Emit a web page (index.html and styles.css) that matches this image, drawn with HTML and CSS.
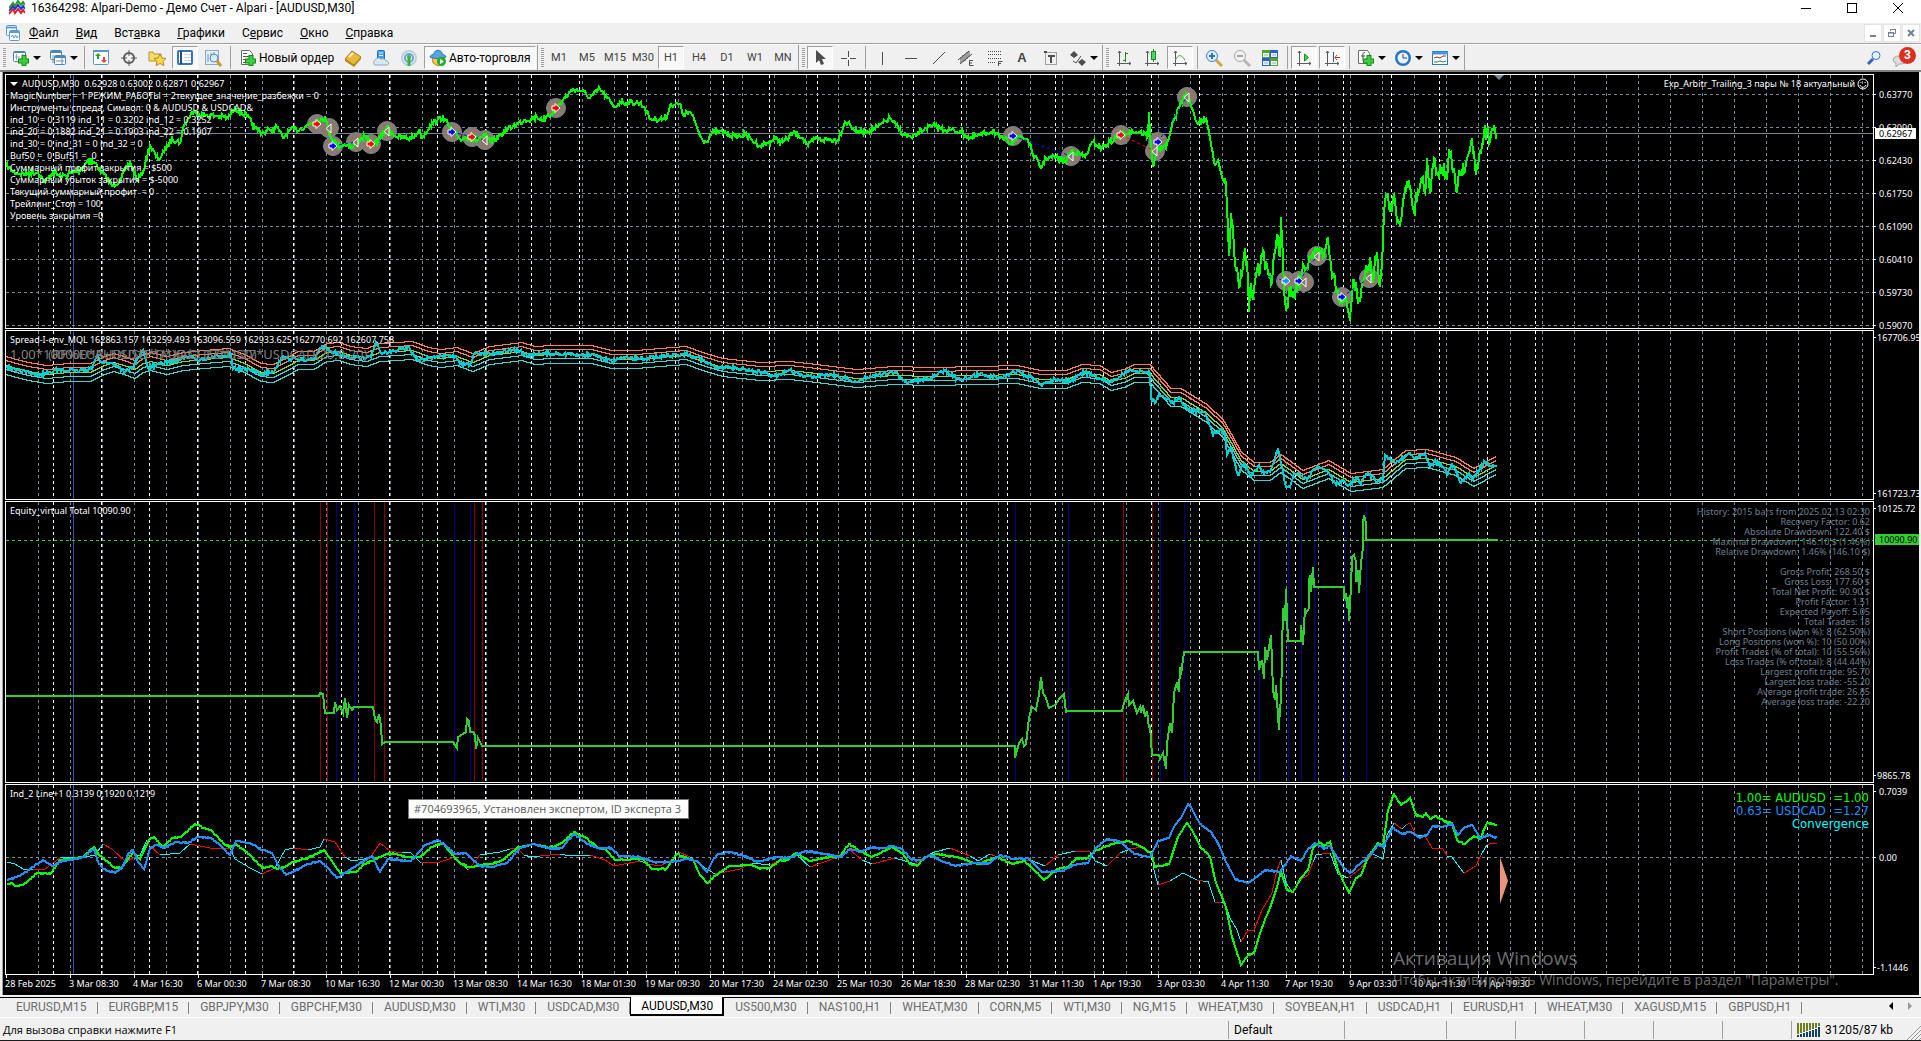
FILE: index.html
```html
<!DOCTYPE html>
<html lang="ru">
<head>
<meta charset="utf-8">
<title>16364298: Alpari-Demo - Демо Счет - Alpari - [AUDUSD,M30]</title>
<link rel="stylesheet" href="styles.css">
</head>
<body>
<header class="titlebar">
  <svg class="app-icon" width="16" height="16" viewBox="0 0 16 16" fill="none" stroke-width="2"><path d="M0 8L4 3L6 6L9 1L12 5L14 2L16 5" stroke="#1ea01e"/><path d="M0 11L4 6L6 9L9 5L12 9L14 6L16 9" stroke="#2233dd"/><path d="M0 14L4 9L6 13L9 9L12 13L14 10L16 13" stroke="#e02020"/></svg>
  <h1 class="title">16364298: Alpari-Demo - Демо Счет - Alpari - [AUDUSD,M30]</h1>
  <div class="window-buttons">
    <button aria-label="Свернуть"><svg width="12" height="12"><path d="M1 6.5h10" stroke="#000"/></svg></button>
    <button aria-label="Развернуть"><svg width="12" height="12"><rect x="1.5" y="1.5" width="9" height="9" fill="none" stroke="#000"/></svg></button>
    <button aria-label="Закрыть"><svg width="12" height="12"><path d="M1 1l10 10M11 1L1 11" stroke="#000"/></svg></button>
  </div>
</header>

<nav class="menubar">
  <svg class="menu-icon" width="16" height="16" viewBox="0 0 16 16"><rect x="1.5" y=".5" width="10" height="10" rx="1" fill="#fff" stroke="#5b9bd5"/><path d="M2 2.500h9" stroke="#5b9bd5" stroke-width="2"/><rect x="4.500" y="5.500" width="10" height="10" rx="1" fill="#fff" stroke="#5b9bd5"/><path d="M5 7h9" stroke="#5b9bd5" stroke-width="2"/><path d="M6 12l1.500-2 1.500 3 1.500-3 1.500 3 1-2" fill="none" stroke="#5b9bd5"/></svg>
  <button><u>Ф</u>айл</button><button><u>В</u>ид</button><button>Вст<u>а</u>вка</button><button><u>Г</u>рафики</button><button>С<u>е</u>рвис</button><button><u>О</u>кно</button><button><u>С</u>правка</button>
  <div class="child-buttons">
    <button aria-label="Свернуть окно"><svg width="10" height="10"><path d="M2 8h6" stroke="#6f8296" stroke-width="2"/></svg></button>
    <button aria-label="Восстановить окно"><svg width="10" height="10" fill="none" stroke="#6f8296"><path d="M3.500 3V1.500h5v4H7M3 1.500h6"/><rect x="1.500" y="4.500" width="5" height="4"/><path d="M1 5h6"/></svg></button>
    <button aria-label="Закрыть окно"><svg width="10" height="10"><path d="M2 2l6 6M8 2L2 8" stroke="#6f8296" stroke-width="2"/></svg></button>
  </div>
</nav>

<div class="toolbar">
  <div class="group">
    <button class="tool drop" aria-label="Новый график"><svg width="18" height="18"><rect x="1.500" y="2.500" width="12" height="10" rx="1" fill="#fff" stroke="#4a7fb0"/><path d="M2 3.500h11" stroke="#4a7fb0"/><path d="M4.500 5v6M10.500 5v6M3 8h5" stroke="#8aa5bd" fill="none"/><path d="M12 6v11M6 12h11" stroke="#168a16" stroke-width="5"/><path d="M12 7v9M7 12h9" stroke="#3ccf3c" stroke-width="3"/></svg></button>
    <button class="tool drop" aria-label="Профили"><svg width="18" height="18"><rect x="1.500" y="1.500" width="11" height="9" rx="1" fill="#fff" stroke="#4a86b8"/><path d="M2 3h10" stroke="#4a86b8" stroke-width="2"/><rect x="5.500" y="6.500" width="11" height="9" rx="1" fill="#fff" stroke="#4a86b8"/><path d="M6 8h10" stroke="#4a86b8" stroke-width="2"/><path d="M7 12h8M4 6v8M13 9v6" stroke="#6d90ad"/></svg></button>
    <span class="sep"></span>
    <button class="tool" aria-label="Обзор рынка"><svg width="18" height="18"><rect x="1.500" y="1.500" width="15" height="14" rx="1" fill="#fff" stroke="#5595cf"/><path d="M1 2h16" stroke="#5595cf" stroke-width="2"/><path d="M6 4l3 3H7v3H5V7H3z" fill="#2aa02a"/><path d="M12 14l3-3h-2V8h-2v3H9z" fill="#e0442a"/></svg></button>
    <button class="tool" aria-label="Окно данных"><svg width="18" height="18" fill="none" stroke="#5a5a5a"><circle cx="9" cy="9" r="5" stroke-width="2"/><path d="M9 1v6M9 11v6M1 9h6M11 9h6"/></svg></button>
    <button class="tool" aria-label="Навигатор"><svg width="18" height="18"><path d="M1 3h4l1 2h7v7H1z" fill="#f7dc6a" stroke="#b8912a"/><path d="M12 5l2 4 4 .500-3 3 1 4-4-2-4 2 1-4-3-3 4-.500z" fill="#ffd84a" stroke="#b8861b"/></svg></button>
    <button class="tool pressed" aria-label="Терминал"><svg width="18" height="18"><rect x="2" y="2" width="14" height="13" rx="1" fill="#fff" stroke="#3875b5" stroke-width="2"/><path d="M5 2v13" stroke="#1f4f8f" stroke-width="2"/><path d="M8 5.500h7M8 8.500h7M8 11.500h7" stroke="#c5d4e4"/></svg></button>
    <button class="tool" aria-label="Тестер стратегий"><svg width="18" height="18"><rect x="1.500" y="1.500" width="13" height="14" fill="#e3edf7" stroke="#8aa8c6"/><path d="M4 13V5M7 10V4M10 8V3" stroke="#6f94b8"/><circle cx="10" cy="9" r="4" fill="#d5e8f8cc" stroke="#5f84a8" stroke-width="1"/><path d="M13 12l4 5" stroke="#c79b3b" stroke-width="3"/></svg></button>
    <span class="sep"></span>
    <button class="tool order"><svg width="18" height="18"><path d="M2.500 1.500h8l3 3v11h-11z" fill="#fff" stroke="#6a6a6a"/><path d="M4 4.500h4M4 7.500h7M4 10.500h4M4 13.500h3" stroke="#555"/><path d="M12 6v11M6 12h11" stroke="#168a16" stroke-width="5"/><path d="M12 7v9M7 12h9" stroke="#3ccf3c" stroke-width="3"/></svg>Новый ордер</button>
    <button class="tool" aria-label="MetaEditor"><svg width="18" height="18"><path d="M1 10L8 2l9 6-7 8z" fill="#e9b93c" stroke="#a77718"/><path d="M1 10l9 6 7-8v2l-7 8-9-6z" fill="#b98420"/><path d="M5 8l4-4" stroke="#fff3b8" stroke-width="2"/></svg></button>
    <button class="tool" aria-label="VPS"><svg width="18" height="18"><rect x="5.500" y="1.500" width="7" height="9" rx="1" fill="#3f9fea" stroke="#1f6fc0"/><path d="M7 4h4M7 6.500h4" stroke="#e4f3ff"/><path d="M3 16a3 3 0 010-5 4 4 0 016-1 4 4 0 015 2 2 2 0 011 4z" fill="#dce9f5" stroke="#8aa9c6"/></svg></button>
    <button class="tool" aria-label="Сигналы"><svg width="18" height="18" fill="none"><circle cx="9" cy="9" r="7" stroke="#b9cfdd" stroke-width="2"/><circle cx="9" cy="9" r="4" stroke="#5fa8c8" stroke-width="2"/><path d="M9 8v9" stroke="#3fae49" stroke-width="3"/><circle cx="9" cy="8" r="2" fill="#3fae49"/></svg></button>
    <button class="tool auto pressed"><svg width="18" height="18"><path d="M3 8h12l-1 6-5 3-5-3z" fill="#f2c746" stroke="#b98c1e"/><path d="M1 8c0-2 3-2 4-3 0-5 8-5 8 0 1 1 4 1 4 3-4 2-12 2-16 0z" fill="#54a5dc" stroke="#2c73ad"/><circle cx="12.500" cy="12.500" r="4.500" fill="#1fae2c"/><path d="M11 10v5l4-2.500z" fill="#fff"/></svg>Авто-торговля</button>
  </div>
  <div class="group frames">
    <button class="tool">M1</button><button class="tool">M5</button><button class="tool">M15</button><button class="tool">M30</button><button class="tool pressed">H1</button><button class="tool">H4</button><button class="tool">D1</button><button class="tool">W1</button><button class="tool">MN</button>
  </div>
  <div class="group">
    <button class="tool pressed" aria-label="Курсор"><svg width="18" height="18"><path d="M5 1v13l3-3 2 5 3-1-2-5h4z" fill="#4d4d4d"/></svg></button>
    <button class="tool" aria-label="Перекрестие"><svg width="18" height="18"><path d="M9.500 2v6M9.500 11v6M2 9.500h6M11 9.500h6" stroke="#4d4d4d"/></svg></button>
    <span class="sep"></span>
    <button class="tool" aria-label="Вертикальная линия"><svg width="18" height="18"><path d="M9.500 3v13" stroke="#4d4d4d"/></svg></button>
    <button class="tool" aria-label="Горизонтальная линия"><svg width="18" height="18"><path d="M4 9.500h12" stroke="#4d4d4d"/></svg></button>
    <button class="tool" aria-label="Трендовая линия"><svg width="18" height="18"><path d="M4 15L16 3" stroke="#4d4d4d"/></svg></button>
    <button class="tool" aria-label="Канал"><svg width="18" height="18"><path d="M1 11L12 2M3 15L15 5M4 8v6M6 6v7M8 5v7M10 3v7M12 2v6" stroke="#4d4d4d" fill="none"/><path d="M16 11.500h-3.500v5h4M12 14h3" stroke="#4d4d4d" fill="none"/></svg></button>
    <button class="tool" aria-label="Фибоначчи"><svg width="18" height="18"><path d="M3 2.500h13M3 5.500h13M3 9.500h13M3 13.500h8" stroke="#4d4d4d" stroke-dasharray="1 1"/><path d="M13.500 17v-4.500h4M13 14.500h3" stroke="#4d4d4d" fill="none"/></svg></button>
    <button class="tool letter" aria-label="Текст">A</button>
    <button class="tool" aria-label="Метка"><svg width="18" height="18"><rect x="4.500" y="3.500" width="11" height="12" fill="none" stroke="#4d4d4d" stroke-dasharray="1 1"/><path d="M7 7h7M10 7v7" stroke="#4d4d4d" stroke-width="2"/><path d="M3 3h3" stroke="#4d4d4d" stroke-width="2"/></svg></button>
    <button class="tool drop" aria-label="Стрелки"><svg width="18" height="18"><path d="M5 2l4 4-4 3-4-3zM13 10l4 3-4 4-4-4z" fill="#4d4d4d"/><path d="M4 12l3 2 5-7" stroke="#4d4d4d" fill="none"/></svg></button>
  </div>
  <div class="group">
    <button class="tool" aria-label="Бары"><svg width="18" height="18"><path d="M4.500 2v15M2 14.500h14M3 4l1.500-2L6 4M14 13l2 1.500-2 1.500" stroke="#5a5a5a" fill="none"/><path d="M10.500 3v10M10 4.500h3M8 11.500h3" stroke="#188a22"/></svg></button>
    <button class="tool" aria-label="Свечи"><svg width="18" height="18"><path d="M4.500 2v15M2 14.500h14M3 4l1.500-2L6 4M14 13l2 1.500-2 1.500" stroke="#5a5a5a" fill="none"/><path d="M10.500 0v13" stroke="#188a22"/><rect x="8.500" y="2.500" width="4" height="8" fill="#49d85a" stroke="#188a22"/></svg></button>
    <button class="tool pressed" aria-label="Линия"><svg width="18" height="18"><path d="M4.500 2v15M2 14.500h14M3 4l1.500-2L6 4M14 13l2 1.500-2 1.500" stroke="#5a5a5a" fill="none"/><path d="M4 12c3-7 6-7 10-1" stroke="#3ca046" fill="none"/></svg></button>
    <span class="sep"></span>
    <button class="tool" aria-label="Приблизить"><svg width="18" height="18"><path d="M11 11l6 6" stroke="#d2a53c" stroke-width="3"/><circle cx="7" cy="7" r="5.500" fill="#d9efff" stroke="#3b82c4" stroke-width="1"/><path d="M4 7h6M7 4v6" stroke="#2f74b8" stroke-width="2"/></svg></button>
    <button class="tool" aria-label="Отдалить"><svg width="18" height="18"><path d="M11 11l6 6" stroke="#b5b5b5" stroke-width="3"/><circle cx="7" cy="7" r="5.500" fill="#f4f4f4" stroke="#a5a5a5"/><path d="M4 7h6" stroke="#a0a0a0" stroke-width="2"/></svg></button>
    <button class="tool" aria-label="Плитка"><svg width="18" height="18"><path d="M1 1h8v8H1zM9 9h8v8H9z" fill="#55a52a"/><path d="M9 1h8v8H9zM1 9h8v8H1z" fill="#2a5fd0"/><path d="M2 4h6v4H2zM10 4h6v4h-6zM2 12h6v4H2zM10 12h6v4h-6z" fill="#eef5ff"/><path d="M3 6h4M11 6h4M3 14h4M11 14h4" stroke="#9ab"/></svg></button>
    <span class="sep"></span>
    <button class="tool pressed" aria-label="Автопрокрутка"><svg width="18" height="18"><path d="M4.500 2v15M2 14.500h14M3 4l1.500-2L6 4M14 13l2 1.500-2 1.500" stroke="#5a5a5a" fill="none"/><path d="M9.500 5v7l4-3.500z" fill="#49d85a" stroke="#188a22"/></svg></button>
    <button class="tool pressed" aria-label="Сдвиг графика"><svg width="18" height="18"><path d="M4.500 2v15M2 14.500h14M3 4l1.500-2L6 4M14 13l2 1.500-2 1.500" stroke="#5a5a5a" fill="none"/><path d="M10.500 3v10" stroke="#2b5b8a"/><path d="M17 8.500h-5M14 6l-2 2.500 2 2.500" stroke="#b0421e" fill="none"/></svg></button>
    <span class="sep"></span>
    <button class="tool drop" aria-label="Индикаторы"><svg width="18" height="18"><path d="M1.500 1.500h9l2 3v10h-11z" fill="#fff" stroke="#6a6a6a"/><path d="M8 3.500c-3 0-2 2-2 8M4 7h4" stroke="#444" fill="none"/><path d="M12 6v11M6 12h11" stroke="#168a16" stroke-width="5"/><path d="M12 7v9M7 12h9" stroke="#3ccf3c" stroke-width="3"/></svg></button>
    <button class="tool drop" aria-label="Периоды"><svg width="18" height="18"><circle cx="9" cy="9" r="8" fill="#2774c8"/><circle cx="9" cy="9" r="5.500" fill="#e8f4ff"/><path d="M9 5v4h4" stroke="#444" fill="none"/></svg></button>
    <button class="tool drop" aria-label="Шаблоны"><svg width="18" height="18"><rect x="1.500" y="2.500" width="15" height="13" fill="#fff" stroke="#2f72b8"/><path d="M1 4h16" stroke="#4b92d8" stroke-width="3"/><path d="M3 9l3-1 3 1 3-2 3 0" stroke="#8a2f1e" fill="none"/><path d="M3 13l3 0 3-1 3 1 3-1" stroke="#2f8a3a" fill="none"/></svg></button>
  </div>
  <div class="notify">
    <button aria-label="Поиск"><svg width="16" height="16"><circle cx="10" cy="5.500" r="4" fill="#e6f1ff" stroke="#3f72d8" stroke-width="1"/><path d="M7 9l-5 5" stroke="#2f62cc" stroke-width="3"/></svg></button>
    <button class="chat" aria-label="Сообщения"><svg width="24" height="22"><path d="M1 13a6 4 0 0110-3l4 4a7 4 0 01-8 3l-3 3v-4a5 4 0 01-3-3z" fill="#dcdcdc" stroke="#a5a5a5"/></svg><span class="badge">3</span></button>
  </div>
</div>

<main class="chart">
  <section class="pane price">
    <div class="plot">
      <svg class="canvas" id="plot-price"></svg>
      <div class="note"><p class="head">AUDUSD,M30&nbsp; 0.62928 0.63002 0.62871 0.62967</p>
        <p>MagicNumber = 1 РЕЖИМ_РАБОТЫ = 2текущее_значение_разбежки = 0</p>
        <p>Инструменты спреда, Символ: 0 &amp; AUDUSD &amp; USDCAD&amp;</p>
        <p>ind_10 = 0.3119 ind_11 = 0.3202 ind_12 = 0.3252</p>
        <p>ind_20 = 0.1882 ind_21 = 0.1903 ind_22 = 0.1907</p>
        <p>ind_30 = 0 ind_31 = 0 ind_32 = 0</p>
        <p>Buf50 =&nbsp; 0 Buf51 =&nbsp; 0</p>
        <p>Суммарный профит закрытия = $500</p>
        <p>Суммарный убыток закрытия = $-5000</p>
        <p>Текущий суммарный профит&nbsp; = 0</p>
        <p>Трейлинг_Стоп = 100</p>
        <p>Уровень закрытия =0</p></div>
      <p class="expert">Exp_Arbitr_Trailing_3 пары № 18 актуальный <svg width="12" height="12" fill="none" stroke="#fff"><circle cx="6" cy="6" r="5"/><path d="M3 7c1 3 5 3 6 0M4 4v1M8 4v1"/></svg></p>
    </div>
    <svg class="scale" id="scale-price"></svg>
  </section>
  <section class="pane spread">
    <div class="plot">
      <svg class="canvas" id="plot-spread"></svg>
      <div class="note"><p class="head">Spread-I-env_MQL 162863.157 163259.493 163096.559 162933.625 162770.692 162607.758</p></div>
      <p class="formula">1.00*100000*AUDUSD*D*XAGUSD*1.27*USDCAD(20,0.20)</p>
      <p class="formula over">(RP%EUR+USD*P*AUD*1.27*USD)</p>
    </div>
    <svg class="scale" id="scale-spread"></svg>
  </section>
  <section class="pane equity">
    <div class="plot">
      <svg class="canvas" id="plot-equity"></svg>
      <div class="note"><p class="head">Equity_virtual Total 10090.90</p></div>
      <div class="stats">
        <p>History: 2015 bars from 2025.02.13 02:30</p><p>Recovery Factor: 0.62</p><p>Absolute Drawdown: 122.40 $</p><p>Maximal Drawdown: 146.10 $ (1.46%)</p><p>Relative Drawdown: 1.46% (146.10 $)</p><p>&nbsp;</p><p>Gross Profit: 268.50 $</p><p>Gross Loss: 177.60 $</p><p>Total Net Profit: 90.90 $</p><p>Profit Factor: 1.51</p><p>Expected Payoff: 5.05</p><p>Total Trades: 18</p><p>Short Positions (won %): 8 (62.50%)</p><p>Long Positions (won %): 10 (50.00%)</p><p>Profit Trades (% of total): 10 (55.56%)</p><p>Loss Trades (% of total): 8 (44.44%)</p><p>Largest profit trade: 95.70</p><p>Largest loss trade: -55.20</p><p>Average profit trade: 26.85</p><p>Average loss trade: -22.20</p>
      </div>
    </div>
    <svg class="scale" id="scale-equity"></svg>
  </section>
  <section class="pane lines">
    <div class="plot">
      <svg class="canvas" id="plot-lines"></svg>
      <div class="note"><p class="head">Ind_2 Line+1 0.3139 0.1920 0.1219</p></div>
      <div class="legend"><p class="lime">1.00= AUDUSD&nbsp; =1.00</p><p class="blue">0.63= USDCAD&nbsp; =1.27</p><p class="aqua">Convergence</p></div>
      <p class="tooltip" role="tooltip">#704693965, Установлен экспертом, ID эксперта 3</p>
    </div>
    <svg class="scale" id="scale-lines"></svg>
  </section>
  <svg class="dates" id="dates"></svg>
  <div class="watermark"><p class="wm-title">Активация Windows</p><p class="wm-text">Чтобы активировать Windows, перейдите в раздел "Параметры".</p></div>
</main>

<nav class="tabs">
  <button>EURUSD,M15</button><button>EURGBP,M15</button><button>GBPJPY,M30</button><button>GBPCHF,M30</button><button>AUDUSD,M30</button><button>WTI,M30</button><button>USDCAD,M30</button><button class="active">AUDUSD,M30</button><button>US500,M30</button><button>NAS100,H1</button><button>WHEAT,M30</button><button>CORN,M5</button><button>WTI,M30</button><button>NG,M15</button><button>WHEAT,M30</button><button>SOYBEAN,H1</button><button>USDCAD,H1</button><button>EURUSD,H1</button><button>WHEAT,M30</button><button>XAGUSD,M15</button><button>GBPUSD,H1</button>
  <div class="tab-arrows"><button aria-label="Назад"><svg width="6" height="8"><path d="M5 0v8L1 4z" fill="#000"/></svg></button><button aria-label="Вперёд"><svg width="6" height="8"><path d="M1 0v8l4-4z" fill="#999"/></svg></button></div>
</nav>

<footer class="status">
  <span class="help">Для вызова справки нажмите F1</span>
  <span class="cell profile">Default</span><span class="cell wide"></span><span class="cell"></span><span class="cell"></span><span class="cell"></span><span class="cell"></span><span class="cell"></span>
  <span class="cell traffic"><svg width="24" height="14"><path d="M1 0v11M4 0v10M7 0v9M10 0v8M13 0v7M16 0v6M19 0v5M22 0v3" stroke="#6b7f1c" stroke-width="2"/><path d="M1 12v2M4 11v3M7 10v4M10 9v5M13 8v6M16 7v7M19 6v8M22 4v10" stroke="#123f63" stroke-width="2"/></svg>31205/87 kb</span>
  <svg class="grip" width="14" height="14"><path d="M0 14L14 0M4 14L14 4M8 14l6-6M12 14l2-2" stroke="#9a9a9a"/></svg>
</footer>
<script src="chart.js"></script>
</body>
</html>
```
FILE: styles.css
```css
* { box-sizing: border-box; }
body {
  margin: 0;
  min-height: 100vh;
  display: flex;
  flex-direction: column;
  background: #f0f0f0;
  color: #000;
  font: 12px/16px Roboto, "Open Sans", sans-serif;
  overflow-x: hidden;
  border-bottom: 1px solid #1c1c1c;
}
p, h1 { margin: 0; font-size: inherit; font-weight: normal; }
button {
  border: 0;
  padding: 0;
  background: none;
  color: inherit;
  font: inherit;
}
svg { display: block; flex: none; }

.titlebar { display: flex; align-items: center; height: 23px; padding: 0 17px 7px 9px; background: #fff; gap: 6px; }
.title { flex: 1; }
.window-buttons { display: flex; gap: 34px; }
.window-buttons button { width: 12px; height: 12px; }

.menubar { display: flex; align-items: center; height: 21px; padding: 0 1px 0 5px; border-bottom: 1px solid #a0a0a0; }
.menu-icon { margin-right: 8px; }
.menubar > button { margin-right: 17px; }
.child-buttons { display: flex; gap: 1px; margin-left: auto; }
.child-buttons button { display: grid; place-items: center; width: 18px; height: 18px; background: #fff; border: 1px solid #e3e3e3; }

.toolbar { display: flex; height: 28px; border-top: 1px solid #fff; border-bottom: 2px solid #808080; color: #444; }
.group { display: flex; padding: 1px 0; border-right: 1px solid #a0a0a0; }
.group::before {
  content: "";
  width: 3px;
  margin: 2px 1px 2px 3px;
  background: repeating-linear-gradient(#a0a0a0 0 1px, #f0f0f0 1px 2px);
}
.group + .group { padding-right: 1px; }
.tool { display: flex; align-items: center; justify-content: center; width: 26px; margin: 0 1px; border: 1px solid transparent; }
.tool.pressed { background: #f8f8f8; border-color: #a0a0a0 #fff #fff #a0a0a0; }
.tool.drop { width: 37px; margin: 0; padding-left: 4px; gap: 3px; justify-content: flex-start; }
.tool.drop::after { content: ""; border: 4px solid transparent; border-top-color: #000; border-bottom-width: 0; }
.tool.order { width: 104px; }
.tool.auto { width: 112px; }
.order, .auto { gap: 2px; padding-left: 4px; justify-content: flex-start; color: #000; font-size: 12px; }
.frames { font-size: 11px; }
.letter { font: bold 13px "Liberation Sans", sans-serif; }
.sep { width: 1px; margin: 0 2px 0 3px; background: #a0a0a0; }
.notify { display: flex; align-items: center; gap: 10px; margin-left: auto; padding-right: 5px; }
.chat { position: relative; }
.badge { position: absolute; top: 0; right: 0; width: 17px; height: 17px; border-radius: 50%; background: #dc2f1e; color: #fff; font-weight: bold; line-height: 17px; }

.chart {
  position: relative;
  flex: 1;
  display: flex;
  flex-direction: column;
  gap: 1px;
  margin: 0 2px;
  padding: 2px 0 0 2px;
  border-left: 1px solid #a0a0a0;
  background: #000;
  color: #fff;
  font: 9px/12px "Noto Sans", "DejaVu Sans Condensed", sans-serif;
}
.pane { display: flex; min-height: 0; }
.price { flex: 255 1 0; }
.spread { flex: 170 1 0; }
.equity { flex: 282 1 0; }
.lines { flex: 191 1 0; }
.plot { position: relative; flex: 1; border: 1px solid #fff; overflow: hidden; }
.canvas { position: absolute; inset: 0; width: 100%; height: 100%; }
.scale { width: 45px; height: 100%; overflow: visible; }
.dates { width: 100%; height: 20px; margin-top: -1px; }
.scale text, .dates text { fill: #fff; }
.note { position: absolute; top: 3px; left: 4px; white-space: nowrap; }
.price .head { padding-left: 12px; }
.price .note::before { content: ""; position: absolute; top: 4px; border: 4px solid transparent; border-top-color: #fff; border-bottom-width: 0; }
.expert { position: absolute; top: 3px; right: 4px; display: flex; align-items: center; gap: 2px; }
.formula { position: absolute; top: 16px; left: 4px; color: #808080; font-size: 13px; line-height: 14px; white-space: nowrap; }
.formula.over { left: 42px; }
.stats { position: absolute; top: 5px; right: 3px; color: #708090; line-height: 10px; text-align: right; }
.legend { position: absolute; top: 6px; right: 4px; font: 13px/13px "DejaVu Sans Condensed", sans-serif; text-align: right; }
.lime { color: #00ff00; }
.blue { color: #1e90ff; }
.aqua { color: #00ffff; }
.tooltip { position: absolute; top: 14px; left: 402px; padding: 0 7px 1px 5px; border: 1px solid #767676; background: #fff; color: #575757; font: 11px/17px "Open Sans", sans-serif; }
.watermark { position: absolute; right: 70px; bottom: 5px; width: 456px; color: #8a8a8acc; font: 14px/20px "Open Sans", sans-serif; white-space: nowrap; }
.wm-title { font-size: 19px; line-height: 24px; }

.tabs { display: flex; height: 20px; margin-top: 2px; border-top: 1px solid #000; color: #6d6d6d; }
.tabs > button { position: relative; padding: 0 11px 1px; }
.tabs > button::after { content: ""; position: absolute; right: 0; top: 4px; bottom: 3px; width: 1px; background: #808080; }
.tabs > button:first-child { padding-left: 16px; }
.tabs > .active { margin: -1px 0 1px; background: #fff; color: #000; border: 1px solid #000; border-width: 0 2px 2px 1px; padding: 1px 9px 0 10px; }
.tabs > .active::after { display: none; }
.tab-arrows { display: flex; gap: 13px; align-items: center; margin-left: auto; padding: 0 8px 4px 0; }
.tab-arrows button { width: 6px; }

.status { display: flex; align-items: center; height: 23px; padding-top: 1px; border-top: 1px solid #fff; }
.help { flex: 1; padding-left: 3px; font: 11px/16px "Open Sans", sans-serif; }
.cell { width: 69px; height: 18px; border-left: 1px solid #a0a0a0; line-height: 18px; }
.profile { width: 116px; padding-left: 5px; }
.wide { width: 102px; }
.traffic { display: flex; align-items: center; gap: 4px; width: 116px; padding-left: 5px; }
.grip { align-self: flex-end; }
```
FILE: chart.js
```js
const NS = 'http://www.w3.org/2000/svg';
const LEFT = 6;

function add(parent, tag, attrs, text) {
  const el = document.createElementNS(NS, tag);
  for (const key in attrs) el.setAttribute(key, attrs[key]);
  if (text) el.textContent = text;
  parent.appendChild(el);
  return el;
}

function pairs(text) {
  return text.trim().split(/\s+/).map(p => p.split(',').map(Number));
}

let seed = 7;
function random() {
  seed = (seed * 16807) % 2147483647;
  return seed / 2147483647 - 0.5;
}

// Turns anchors into a one-value-per-bar series with the given tick noise.
function series(anchors, noise) {
  const out = [];
  for (let i = 1; i < anchors.length; i++) {
    const [x0, y0] = anchors[i - 1], [x1, y1] = anchors[i];
    for (let x = x0; x < x1; x++) {
      const amp = typeof noise === 'function' ? noise(x) : noise;
      const jitter = x === x0 ? 0 : random() * 2 * amp;
      out.push([x, Math.round(y0 + (y1 - y0) * (x - x0) / (x1 - x0) + jitter)]);
    }
  }
  out.push(anchors[anchors.length - 1]);
  return out;
}

function line(parent, points, stroke, width, extra) {
  return add(parent, 'polyline', Object.assign({
    points: points.map(p => p.join(',')).join(' '),
    fill: 'none', stroke, 'stroke-width': width, 'shape-rendering': 'crispEdges'
  }, extra));
}

const days = [];
for (let x = 53; x <= 485; x += 48) days.push(x);
for (let x = 531; x <= 723; x += 48) days.push(x);
for (let x = 769; x <= 961; x += 48) days.push(x);
for (let x = 1007; x <= 1535; x += 48) days.push(x);

function vline(parent, x, color, dash) {
  add(parent, 'line', { x1: x + 0.5, x2: x + 0.5, y1: 0, y2: 2000, stroke: color, 'stroke-dasharray': dash || 'none' });
}

function prepare(id, top) {
  const svg = document.getElementById(id);
  const g = add(svg, 'g', { transform: `translate(${-LEFT} 0)` });
  for (let x = 38; x < 1900; x += 32) vline(g, x, '#778899', '3 3');
  days.forEach(x => vline(g, x, '#ffffff', '3 3'));
  vline(g, 73, '#3a55b0');
  return add(g, 'g', { transform: `translate(0 ${-top})` });
}

function hline(parent, y, color, dash) {
  add(parent, 'line', { x1: 6, x2: 4000, y1: y + 0.5, y2: y + 0.5, stroke: color, 'stroke-dasharray': dash || 'none' });
}

function scale(id, top, labels) {
  const svg = document.getElementById(id);
  labels.forEach(([y, text, x]) => {
    add(svg, 'line', { x1: 0, x2: 2, y1: y - top + 0.5, y2: y - top + 0.5, stroke: '#fff' });
    add(svg, 'text', { x: x || 5, y: y - top + 4 }, text);
  });
  return svg;
}

// Price pane
const price = prepare('plot-price', 75);
[94, 127, 160, 193, 226, 259, 292, 325].forEach(y => hline(price, y, '#778899', '3 3'));
hline(price, 133, '#778899');

const deals = [
  [317,124,'sell'],[329,128,'exit'],[333,146,'buy'],[356,142,'exit'],[371,144,'sell'],[387,131,'exit'],
  [452,132,'buy'],[472,137,'sell'],[485,140,'exit'],[556,108,'sell'],[1013,136,'buy'],[1071,156,'exit'],
  [1121,135,'sell'],[1155,151,'exit'],[1158,142,'buy'],[1187,97,'exit'],[1286,281,'open'],[1299,281,'buy'],
  [1304,282,'exit'],[1317,256,'exit'],[1342,297,'buy'],[1369,278,'exit']
];
deals.forEach(([x, y]) => add(price, 'circle', { cx: x, cy: y, r: 9.5, fill: '#8b7a6c', stroke: '#778899' }));

const priceLine = series(pairs(`6,165 12,171 20,174 30,173 38,172 45,182 53,172 62,177 72,173 80,170 88,160 95,163 102,172 112,186
120,180 130,162 137,180 143,172 150,145 158,160 164,152 172,138 180,143 184,125 192,112 205,115 218,116 228,118 235,108 247,116
255,128 262,133 270,130 277,127 283,138 290,130 300,129 308,125 318,120 325,118 330,135 337,145 348,144 352,148 360,140 365,136
372,146 380,138 387,127 397,137 405,138 413,138 419,130 422,138 430,125 443,117 450,128 460,139 468,137 475,140 485,136 492,142
500,135 513,126 525,120 537,117 545,120 553,112 563,100 570,92 573,89 582,91 590,98 600,89 607,98 614,107 620,102 640,103 645,108
650,119 666,119 670,105 680,104 683,115 690,112 695,122 700,136 706,142 712,133 724,132 735,136 745,135 752,140 760,146 768,143
775,139 783,142 795,132 803,138 808,146 815,139 838,140 845,122 848,123 857,132 870,130 878,127 890,118 903,134 912,138 925,128
935,126 945,130 960,131 970,138 985,134 993,130 1000,138 1012,142 1020,136 1028,140 1032,152 1041,168 1046,158 1056,157 1065,162
1072,150 1085,157 1093,142 1102,148 1110,142 1120,135 1130,131 1140,132 1148,136 1149,112 1150,135 1153,167 1157,148 1166,148
1172,125 1180,105 1186,93 1192,108 1197,123 1202,120 1207,122 1211,143 1214,163 1218,160 1222,177 1226,183 1228,227 1229,256
1231,213 1233,227 1235,263 1237,267 1240,286 1243,267 1245,248 1247,263 1248,280 1249,312 1251,283 1253,300 1256,273 1260,272
1263,250 1265,270 1270,273 1272,283 1275,253 1278,237 1280,257 1281,217 1283,253 1284,293 1287,307 1289,287 1292,295 1298,283
1305,270 1310,257 1315,247 1320,253 1323,260 1326,248 1328,237 1330,257 1333,277 1337,290 1340,303 1345,300 1348,310 1350,321
1351,303 1354,280 1357,293 1360,302 1362,283 1367,273 1370,257 1373,283 1377,252 1379,283 1382,267 1384,213 1388,193 1390,212
1393,197 1396,210 1399,222 1404,197 1409,180 1414,212 1418,190 1423,177 1425,193 1427,158 1430,193 1434,158 1438,173 1442,167
1446,177 1450,153 1456,190 1460,173 1465,172 1469,153 1472,138 1475,167 1478,167 1480,150 1484,133 1487,130 1490,142 1494,125 1497,138`),
  x => x < 1225 ? 3 : 10);
line(price, priceLine, '#00ff00', 2);

[[333,146,356,142,'b'],[452,132,485,140,'b'],[1013,136,1071,156,'b'],[1121,135,1155,151,'r'],[1158,142,1187,97,'b'],
 [1262,275,1286,281,'b'],[1299,281,1317,256,'b'],[1342,297,1369,278,'b']].forEach(([x1, y1, x2, y2, c]) =>
  add(price, 'line', { x1, y1, x2, y2, stroke: c === 'b' ? '#0000ff' : '#ff0000', 'stroke-dasharray': '3 3' }));

const arrows = { sell: '#ff0000', buy: '#0000ff', open: '#1e90ff' };
deals.forEach(([x, y, kind]) => {
  if (kind === 'exit') {
    add(price, 'path', { d: `M${x + 2} ${y - 4}v9l-5 -4.500z`, fill: '#8b7a6c', stroke: '#fff' });
  } else {
    add(price, 'path', { d: `M${x - 4} ${y - 2}h3v-2.500l5 4.500l-5 4.500v-2.500h-3z`, fill: arrows[kind], stroke: '#fff' });
  }
});
add(price, 'path', { d: 'M1494 75h10l-5 5z', fill: '#778899' });

const priceScale = scale('scale-price', 74, [[94,'0.63770'],[127,'0.63090'],[160,'0.62430'],[193,'0.61750'],
  [226,'0.61090'],[259,'0.60410'],[292,'0.59730'],[325,'0.59070']]);
add(priceScale, 'rect', { x: 1, y: 54, width: 41, height: 11, fill: '#fff' });
add(priceScale, 'text', { x: 5, y: 63, style: 'fill:#000' }, '0.62967');

// Spread with its envelopes
const spread = prepare('plot-spread', 331);
const middle = series(pairs(`6,365 24,370 40,373 47,374 69,372 90,372 102,366 114,362 127,366 135,369 143,363 151,361 167,365 184,361
204,359 229,357 245,363 261,372 273,373 286,367 298,360 314,360 327,352 339,351 351,355 367,357 380,352 396,351 412,350 429,356
441,358 457,356 473,362 490,355 506,353 522,351 535,355 551,354 571,354 592,354 612,359 637,359 660,357 686,355 703,361 723,367
760,371 790,370 808,372 857,378 894,375 931,376 980,375 1017,374 1041,379 1066,379 1082,373 1100,374 1111,381 1124,378 1134,373
1150,373 1171,397 1181,397 1207,413 1223,428 1233,445 1241,460 1254,471 1270,471 1281,463 1291,470 1303,479 1329,469 1351,482
1383,478 1406,459 1427,458 1456,466 1474,477 1496,465`), 0);
[[-9, '#ff7f50'], [-5, '#ff7f50'], [0, '#9acd32'], [4, '#48d1cc'], [9, '#48d1cc']].forEach(([dy, color]) =>
  line(spread, middle.map(([x, y]) => [x, y + dy + 0.5]), color, 1));
line(spread, series(pairs(`6,367 20,371 40,375 55,370 75,371 92,369 97,355 101,362 115,364 125,372 133,367 143,350 148,368 160,364
180,360 187,357 200,360 220,356 231,354 233,369 250,370 262,374 275,370 282,357 287,358 298,360 315,359 322,346 330,351 345,356
365,358 371,357 376,342 381,353 395,351 408,347 418,360 430,358 455,356 462,365 470,364 475,354 495,353 513,350 520,351 527,356
545,353 575,355 595,355 612,362 620,358 640,359 660,356 686,354 700,358 715,368 730,367 760,372 775,376 790,370 805,377 830,374
857,382 870,376 895,372 905,382 931,378 945,371 960,380 980,374 1000,378 1017,371 1030,377 1041,385 1055,379 1070,381 1085,372
1100,379 1110,382 1131,370 1150,373 1151,398 1156,402 1159,394 1173,403 1179,397 1188,410 1205,412 1213,435 1220,430 1225,433
1227,455 1231,448 1238,475 1244,463 1251,477 1259,465 1262,472 1270,472 1278,448 1282,467 1286,487 1290,487 1294,473 1307,480
1317,466 1328,472 1336,485 1342,480 1349,485 1357,477 1360,483 1368,473 1375,480 1383,480 1385,455 1396,463 1409,453 1414,458
1425,453 1430,467 1435,460 1443,467 1447,475 1452,463 1461,483 1469,473 1472,480 1485,462 1490,466 1497,467`), 2), '#00ced1', 2);
scale('scale-spread', 330, [[337,'167706.95',3],[493,'161723.73',3]]);

// Equity curve
const equity = prepare('plot-equity', 502);
[320,327,374,384,474,482,1123,1152].forEach(x => vline(add(equity, 'g', { transform: 'translate(0 502)' }), x, '#8b0000'));
[336,354,454,470,1015,1068,1160,1184,1259,1288,1301,1314,1344,1366].forEach(x => vline(add(equity, 'g', { transform: 'translate(0 502)' }), x, '#00008b'));
hline(equity, 540, '#32cd32', '3 3');
line(equity, pairs(`6,696 319,696 320,693 323,694 324,704 325,713 334,713 335,702 337,710 340,706 343,713 345,698 347,718 349,705
352,710 354,707 373,707 375,719 377,722 379,714 381,726 382,744 385,742 453,742 455,745 457,748 458,737 463,734 466,732 467,719
469,721 470,732 473,732 475,735 476,749 478,738 480,742 482,746 1015,746 1015,758 1019,743 1022,739 1024,746 1026,744 1029,718
1032,707 1036,710 1039,694 1041,677 1043,693 1046,698 1049,708 1055,705 1060,698 1064,694 1066,712 1068,711 1122,711 1124,703
1128,694 1129,705 1133,701 1137,713 1140,707 1141,713 1143,705 1145,717 1147,711 1149,728 1150,725 1152,755 1159,755 1160,759
1163,753 1166,769 1167,744 1170,723 1172,733 1174,693 1177,682 1179,692 1180,667 1181,675 1184,652 1258,652 1259,670 1262,660
1264,679 1265,647 1267,660 1271,635 1273,690 1275,700 1276,685 1279,730 1280,705 1281,703 1282,653 1283,608 1285,621 1286,589
1288,641 1301,641 1301,625 1303,645 1305,608 1306,613 1309,608 1309,582 1310,575 1311,592 1313,567 1314,587 1344,587 1344,599
1346,593 1347,608 1348,597 1349,621 1351,587 1352,557 1354,555 1356,562 1356,582 1358,570 1359,593 1361,563 1363,547 1363,523
1364,515 1366,523 1366,540 1498,540`), '#32cd32', 2);
const equityScale = scale('scale-equity', 501, [[508,'10125.72',3],[775,'9865.78',3]]);
add(equityScale, 'rect', { x: 1, y: 33, width: 44, height: 11, fill: '#32cd32' });
add(equityScale, 'text', { x: 5, y: 42, style: 'fill:#000' }, '10090.90');

// Convergence lines
const lines = prepare('plot-lines', 785);
hline(lines, 857, '#778899', '3 3');
const AQUA = '#00ffff', RED = '#ff0000';
[[AQUA,'7,862 15,864 23,869 33,869'],[RED,'33,869 45,869 60,858'],[AQUA,'60,858 73,857 85,857 95,855 103,844'],
 [RED,'103,844 112,849 126,862 135,857'],[AQUA,'135,857 140,855 147,840'],[RED,'147,840 150,846 160,855'],
 [AQUA,'160,855 180,853 190,844'],[RED,'190,844 215,849 230,848'],[AQUA,'230,848 235,859 250,868 262,874'],
 [RED,'262,874 275,868'],[AQUA,'275,868 285,850 293,848'],[RED,'293,848 308,850'],[AQUA,'308,850 320,847 324,839'],
 [RED,'324,839 335,842 345,857'],[AQUA,'345,857 352,861 370,858'],[RED,'370,858 380,843 390,851 402,853'],
 [AQUA,'402,853 410,852 421,863'],[RED,'421,863 440,862 455,857'],[AQUA,'455,857 468,870'],[RED,'468,870 480,855'],
 [AQUA,'480,855 500,852 510,849'],[RED,'510,849 517,848 524,855'],[AQUA,'524,855 531,857 540,856'],[RED,'540,856 560,854'],
 [AQUA,'560,854 570,856 590,855'],[RED,'590,855 605,860 614,866 640,861'],[AQUA,'640,861 648,864'],[RED,'648,864 660,866 672,860'],
 [AQUA,'672,860 679,852'],[RED,'679,852 690,857'],[AQUA,'690,857 705,868 715,874'],[RED,'715,874 740,869 752,863'],
 [AQUA,'752,863 770,865'],[RED,'770,865 780,860 797,855'],[AQUA,'797,855 810,867'],[RED,'810,867 838,857'],
 [AQUA,'838,857 850,850'],[RED,'850,850 862,860'],[AQUA,'862,860 872,864'],[RED,'872,864 895,858'],[AQUA,'895,858 915,864'],
 [RED,'915,864 930,854'],[AQUA,'930,854 935,852 950,848'],[RED,'950,848 970,856'],[AQUA,'970,856 978,861 990,854'],
 [RED,'990,854 1012,863 1030,860'],[AQUA,'1030,860 1045,866'],[RED,'1045,866 1058,855'],[AQUA,'1058,855 1075,851'],
 [RED,'1075,851 1090,852'],[AQUA,'1090,852 1095,861 1107,866'],[RED,'1107,866 1120,853'],[AQUA,'1120,853 1130,849'],
 [RED,'1130,849 1142,847 1152,853'],[AQUA,'1152,853 1154,870 1158,885'],[RED,'1158,885 1170,881'],[AQUA,'1170,881 1183,873 1197,880'],
 [RED,'1197,880 1203,881'],[AQUA,'1203,881 1208,881 1215,902'],[RED,'1215,902 1221,902'],[AQUA,'1221,902 1225,903 1230,918 1237,930 1241,942'],
 [RED,'1241,942 1248,930 1254,930 1262,910 1272,893 1277,870 1281,860'],[AQUA,'1281,860 1286,883 1293,893'],
 [RED,'1293,893 1300,880 1308,875 1313,862'],[AQUA,'1313,862 1316,855 1322,854'],[RED,'1322,854 1330,853'],
 [AQUA,'1330,853 1338,874 1348,878'],[RED,'1348,878 1360,869 1373,854'],[AQUA,'1373,854 1383,859 1387,835 1394,823'],
 [RED,'1394,823 1402,829'],[AQUA,'1402,829 1406,825'],[RED,'1406,825 1410,823 1416,835'],[AQUA,'1416,835 1425,836'],
 [RED,'1425,836 1432,848 1443,849 1447,856'],[AQUA,'1447,856 1452,857 1464,873'],[RED,'1464,873 1476,866 1481,855'],
 [AQUA,'1481,855 1487,845'],[RED,'1487,845 1491,843 1497,844']].forEach(([color, pts]) => line(lines, pairs(pts), color, 1));
line(lines, series(pairs(`7,884 11,883 16,886 23,885 37,873 50,874 60,860 73,859 83,857 94,847 99,855 115,868 122,867 133,853 140,859
149,840 154,837 163,847 172,838 181,837 195,824 204,828 211,830 225,845 232,847 236,844 250,855 262,868 271,866 278,869 285,867
292,862 308,858 324,850 331,860 340,873 356,872 363,865 374,860 386,854 397,854 406,857 420,857 432,847 443,843 452,855 459,862
468,867 491,864 503,860 517,848 533,844 549,848 562,843 574,832 585,837 597,847 606,850 615,860 643,859 652,869 666,869 677,854
684,857 693,860 700,875 707,883 720,872 730,866 751,865 759,868 770,868 779,861 787,860 796,853 809,861 830,857 839,857 849,844
858,850 872,857 892,847 902,853 910,864 917,866 925,857 937,854 957,857 977,864 997,857 1012,864 1024,861 1034,870 1044,880
1056,870 1068,867 1076,859 1088,858 1095,851 1115,843 1129,841 1141,847 1151,853 1155,867 1169,864 1178,837 1187,823 1192,830
1200,846 1210,857 1216,883 1226,907 1232,937 1241,965 1248,955 1254,953 1261,930 1271,905 1277,887 1281,872 1287,890 1293,892
1301,878 1308,870 1313,848 1319,842 1324,846 1330,842 1338,870 1349,893 1356,878 1361,875 1368,857 1378,843 1383,847 1388,810
1394,794 1401,805 1410,798 1416,815 1423,817 1426,813 1430,819 1435,816 1444,821 1452,823 1457,840 1464,844 1474,836 1480,839
1487,823 1497,825`), 0.6), '#00ff00', 2);
line(lines, series(pairs(`7,880 20,876 30,869 43,860 53,866 62,861 75,859 83,857 94,849 98,862 103,869 115,873 122,868 128,854 133,850
138,862 144,869 150,848 157,845 165,848 176,842 188,843 198,837 211,838 222,847 230,855 236,841 250,843 262,850 272,853 278,865
286,875 294,871 308,864 320,861 328,868 337,878 347,872 356,866 372,856 380,872 388,859 400,860 411,861 425,845 438,840 446,846
455,854 466,853 480,866 492,867 507,863 520,848 533,844 552,849 562,848 574,834 586,843 597,848 611,848 620,856 640,857 655,862
672,862 688,859 697,861 707,872 713,860 718,854 730,852 745,856 757,862 778,857 790,858 805,851 820,853 840,857 850,849 860,852
870,848 885,848 892,846 902,849 912,860 922,860 930,855 942,861 955,866 975,863 988,864 1000,855 1012,859 1028,858 1042,872
1063,871 1073,865 1088,863 1095,849 1107,839 1120,842 1135,854 1150,857 1158,841 1169,838 1175,825 1181,818 1188,804 1192,809
1200,824 1210,831 1217,841 1226,862 1235,879 1248,883 1258,876 1265,870 1280,872 1291,856 1301,861 1308,849 1315,843 1324,849
1330,846 1344,868 1350,873 1360,864 1372,853 1378,845 1383,847 1393,828 1402,834 1411,832 1420,838 1427,835 1433,826 1443,827
1452,824 1458,835 1464,828 1472,825 1480,838 1489,835 1497,838`), 0.6), '#1e90ff', 2);
add(lines, 'path', { d: 'M1500 857l8 24l-8 23z', fill: '#e9967a' });
scale('scale-lines', 784, [[791,'0.7039'],[857,'0.00'],[967,'-1.1446',3]]);

// Time axis
const dates = document.getElementById('dates');
['28 Feb 2025','3 Mar 08:30','4 Mar 16:30','6 Mar 00:30','7 Mar 08:30','10 Mar 16:30','12 Mar 00:30','13 Mar 08:30','14 Mar 16:30',
 '18 Mar 01:30','19 Mar 09:30','20 Mar 17:30','24 Mar 02:30','25 Mar 10:30','26 Mar 18:30','28 Mar 02:30','31 Mar 11:30','1 Apr 19:30',
 '3 Apr 03:30','4 Apr 11:30','7 Apr 19:30','9 Apr 03:30','10 Apr 11:30','11 Apr 19:30'].forEach((label, i) => {
  add(dates, 'line', { x1: i * 64 + 1.5, x2: i * 64 + 1.5, y1: 0, y2: 3, stroke: '#fff' });
  add(dates, 'text', { x: i * 64, y: 12 }, label);
});
```
